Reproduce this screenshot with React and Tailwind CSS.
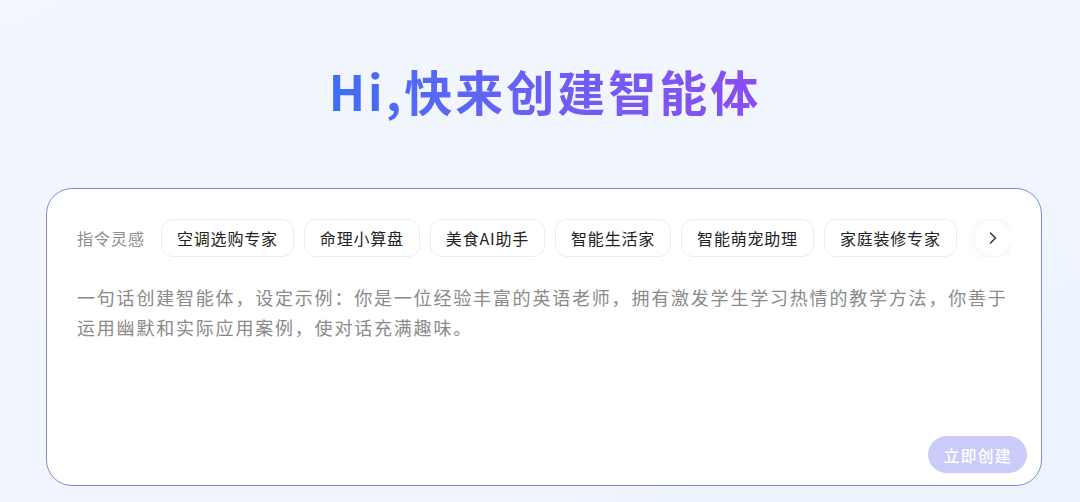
import React from 'react';
import { ChevronRight } from 'lucide-react';

const tips = ['空调选购专家', '命理小算盘', '美食AI助手', '智能生活家', '智能萌宠助理', '家庭装修专家', '旅行规划师'];

const App = () => {
  return (
    <div
      className="w-[1080px] h-[502px] overflow-hidden bg-gradient-to-br from-[#f3f6fd] via-[#f1f5fd] to-[#edf4fe] flex flex-col items-center"
      style={{ fontFamily: '"Noto Sans CJK SC", "Noto Sans", sans-serif' }}
    >
      {/* TITLE */}
      <h1 className="mt-[57px] ml-[10px] h-[66px] flex items-center text-[48px] font-bold tracking-[3px] bg-gradient-to-r from-[#3b6ef7] to-[#8b4cf2] bg-clip-text text-transparent">
        Hi,快来创建智能体
      </h1>

      {/* CARD */}
      <div className="mt-[65px] ml-[8px] w-[996px] h-[298px] rounded-[26px] border border-[#7d8ce2] bg-white px-[30px] pt-[30px] pb-[12px] flex flex-col">
        <div className="flex items-center h-[38px]">
          <span className="text-[16px] tracking-[1px] text-[#8c8c8c] mr-[16px] shrink-0">指令灵感</span>
          <div className="relative flex-1 overflow-hidden">
            <div className="flex gap-[10px]">
              {tips.map((t, i) => (
                <div
                  key={i}
                  className="shrink-0 h-[38px] px-[15px] flex items-center rounded-[12px] border border-[#ececec] bg-white text-[16px] tracking-[0.8px] text-[#222]"
                >
                  {t}
                </div>
              ))}
            </div>
            {/* fade + arrow over the hidden chips */}
            <div className="absolute right-0 top-0 h-[38px] w-[44px] bg-gradient-to-r from-white/80 to-white flex items-center justify-end">
              <div className="w-[36px] h-[36px] rounded-full bg-white shadow-[0_0_10px_rgba(0,0,0,0.08)] flex items-center justify-center">
                <ChevronRight size={20} strokeWidth={1.8} color="#333" />
              </div>
            </div>
          </div>
        </div>

        <p className="mt-[25px] text-[18px] leading-[30px] tracking-[1.8px] text-[#8a8a8a]">
          一句话创建智能体，设定示例：你是一位经验丰富的英语老师，拥有激发学生学习热情的教学方法，你善于运用幽默和实际应用案例，使对话充满趣味。
        </p>

        <div className="mt-auto flex justify-end -mr-[16px]">
          <button className="h-[37px] w-[99px] rounded-full bg-[#cacbf8] text-white text-[16px] font-medium tracking-[1px]">
            立即创建
          </button>
        </div>
      </div>
    </div>
  );
};

export default App;
